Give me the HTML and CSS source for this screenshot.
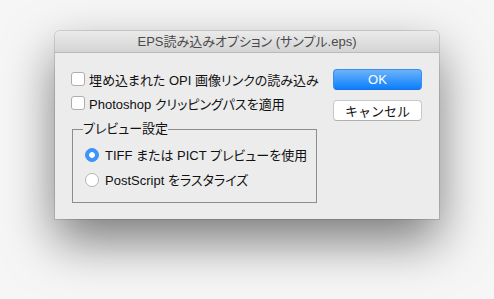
FILE: index.html
```html
<!DOCTYPE html>
<html lang="ja">
<head>
    <meta charset="UTF-8">
    <title>EPS読み込みオプション</title>
    <link rel="stylesheet" href="styles.css">
</head>
<body>
    <div class="window">
        <div class="titlebar">EPS読み込みオプション (サンプル.eps)</div>
        <div class="content">
            <div class="options">
                <label class="row check-row"><span class="checkbox"></span>埋め込まれた OPI 画像リンクの読み込み</label>
                <label class="row check-row"><span class="checkbox"></span>Photoshop クリッピングパスを適用</label>
                <fieldset class="group">
                    <legend>プレビュー設定</legend>
                    <label class="row radio-row"><span class="radio checked"></span>TIFF または PICT プレビューを使用</label>
                    <label class="row radio-row"><span class="radio"></span>PostScript をラスタライズ</label>
                </fieldset>
            </div>
            <div class="buttons">
                <button class="btn btn-default">OK</button>
                <button class="btn">キャンセル</button>
            </div>
        </div>
    </div>
</body>
</html>
```

FILE: styles.css
```css
/* macOS 風ダイアログ */
html, body {
    margin: 0;
    padding: 0;
}
body {
    background: #f6f6f6;
    font-family: "Liberation Sans", "Noto Sans CJK JP", sans-serif;
    font-size: 13px;
    font-feature-settings: "palt";
    color: #111;
    padding: 31px 0 0 55px;
    height: 299px;
    box-sizing: border-box;
}
.window {
    width: 384px;
    height: 188px;
    background: #ececec;
    border-radius: 5px 5px 0 0;
    box-shadow: 0 0 0 1px rgba(0,0,0,0.12), 0 22px 50px rgba(0,0,0,0.5);
    overflow: hidden;
}
.titlebar {
    height: 21px;
    line-height: 21px;
    text-align: center;
    color: #4a4a4a;
    font-size: 13px;
    background: linear-gradient(#ebebeb, #d4d4d4);
    border-bottom: 1px solid #b9b9b9;
}
.content {
    display: flex;
    justify-content: space-between;
    padding: 14px 17px 0 16px;
}
.options {
    display: flex;
    flex-direction: column;
}
.row {
    display: flex;
    align-items: center;
    height: 24px;
    white-space: nowrap;
}
.checkbox {
    width: 12px;
    height: 12px;
    border: 1px solid #adadad;
    border-radius: 3px;
    background: #fff;
    margin-right: 4px;
}
.group {
    margin: 6px 0 0 1px;
    width: 245px;
    box-sizing: border-box;
    border: 1px solid #8d8d8d;
    padding: 5px 0 10px 12px;
}
.group legend {
    padding: 0;
    margin-left: -2px;
    line-height: 16px;
}
.radio-row {
    height: 25px;
}
.radio {
    width: 12px;
    height: 12px;
    border: 1px solid #b3b3b3;
    border-radius: 50%;
    background: #fff;
    margin-right: 6px;
    box-sizing: content-box;
}
.radio.checked {
    border-color: #3a8ff5;
    background: radial-gradient(circle, #fff 0 2.5px, #3d97fb 3.2px);
}
.buttons {
    display: flex;
    flex-direction: column;
    gap: 10px;
    padding-top: 2px;
}
.btn {
    width: 89px;
    height: 21px;
    padding: 0;
    font-family: inherit;
    font-size: 13px;
    color: #111;
    background: #fff;
    border: 1px solid #c8c8c8;
    border-bottom-color: #b0b0b0;
    border-radius: 4px;
}
.btn-default {
    color: #fff;
    background: linear-gradient(#6cb3fa, #0b7ffd);
    border-color: #3b8cf0;
    border-bottom-color: #1e6fe0;
}
```
